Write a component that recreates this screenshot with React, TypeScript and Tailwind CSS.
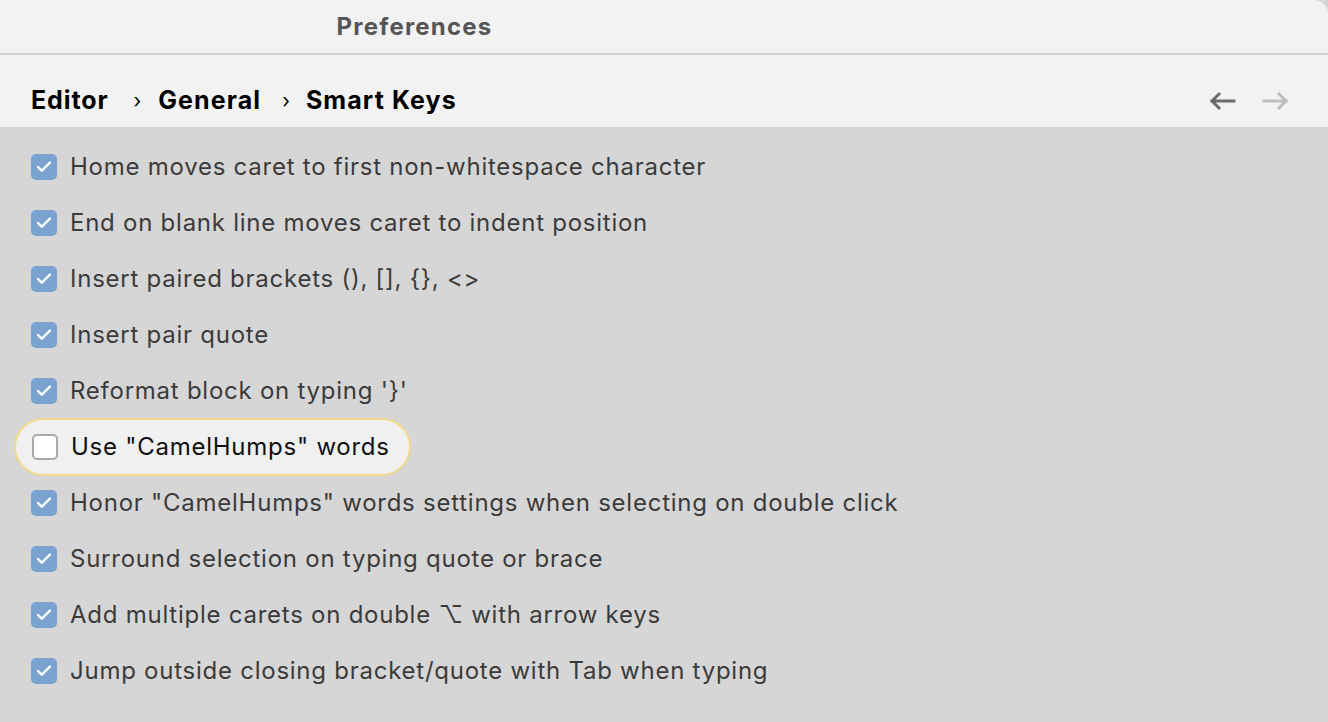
import { Check } from 'lucide-react'

const options: { label: string; checked: boolean }[] = [
  { label: 'Home moves caret to first non-whitespace character', checked: true },
  { label: 'End on blank line moves caret to indent position', checked: true },
  { label: 'Insert paired brackets (), [], {}, <>', checked: true },
  { label: 'Insert pair quote', checked: true },
  { label: "Reformat block on typing '}'", checked: true },
  { label: 'Use "CamelHumps" words', checked: false },
  { label: 'Honor "CamelHumps" words settings when selecting on double click', checked: true },
  { label: 'Surround selection on typing quote or brace', checked: true },
  { label: 'Add multiple carets on double \u2325 with arrow keys', checked: true },
  { label: 'Jump outside closing bracket/quote with Tab when typing', checked: true },
]

function ArrowIcon({ dir, color }: { dir: 'left' | 'right'; color: string }) {
  return (
    <svg width="28" height="20" viewBox="0 0 28 20" className={color}>
      {dir === 'left' ? (
        <path d="M26 10H4M11 3L4 10L11 17" fill="none" stroke="currentColor" strokeWidth="3" strokeLinecap="square" />
      ) : (
        <path d="M2 10H24M17 3L24 10L17 17" fill="none" stroke="currentColor" strokeWidth="3" strokeLinecap="square" />
      )}
    </svg>
  )
}

function OptionRow({ label, checked }: { label: string; checked: boolean }) {
  if (!checked) {
    return (
      <div className="h-[56px] flex items-center">
        <div className="flex items-center h-[58px] pl-[16px] pr-[19px] -ml-[17px] rounded-full bg-[#f0f0f0] border-2 border-[#f0da8e]">
          <div className="w-[26px] h-[26px] rounded-[5px] bg-white border-2 border-[#a8a8a8]" />
          <span className="ml-[13px] text-[24px] tracking-[0.75px] text-[#111]">{label}</span>
        </div>
      </div>
    )
  }
  return (
    <div className="h-[56px] flex items-center">
      <div className="w-[26px] h-[26px] rounded-[5px] bg-[#7aa3cf] flex items-center justify-center">
        <Check className="w-[18px] h-[18px] text-white" strokeWidth={3.2} />
      </div>
      <span className="ml-[13px] text-[24px] tracking-[0.75px] text-[#3b3b3b]">{label}</span>
    </div>
  )
}

export default function App() {
  return (
    <div className="w-[1328px] h-[722px] overflow-hidden bg-[#d6d6d6] font-['Inter','Noto_Sans',sans-serif]">
      <div className="h-[55px] bg-[#f2f2f2] border-b-2 border-[#d0d0d0] rounded-tr-[14px] flex items-center">
        <div className="w-[829px] text-center text-[24px] font-bold tracking-[1.2px] text-[#555]">Preferences</div>
      </div>
      <div className="h-[74px] bg-[#f2f2f2] border-b-2 border-[#d4d4d4] flex items-center pt-[20px] pl-[31px] pr-[38px]">
        <span className="text-[25px] font-bold tracking-[0.9px] text-black">Editor</span>
        <span className="ml-[25px] text-[20px] text-black">›</span>
        <span className="ml-[17px] text-[25px] font-bold tracking-[1.1px] text-black">General</span>
        <span className="ml-[21px] text-[20px] text-black">›</span>
        <span className="ml-[16px] text-[25px] font-bold tracking-[1.1px] text-black">Smart Keys</span>
        <div className="ml-auto flex items-center gap-[26px]">
          <ArrowIcon dir="left" color="text-[#6b6b6b]" />
          <ArrowIcon dir="right" color="text-[#bdbdbd]" />
        </div>
      </div>
      <div className="pl-[31px] pt-[10px]">
        {options.map((o) => (
          <OptionRow key={o.label} label={o.label} checked={o.checked} />
        ))}
      </div>
    </div>
  )
}
